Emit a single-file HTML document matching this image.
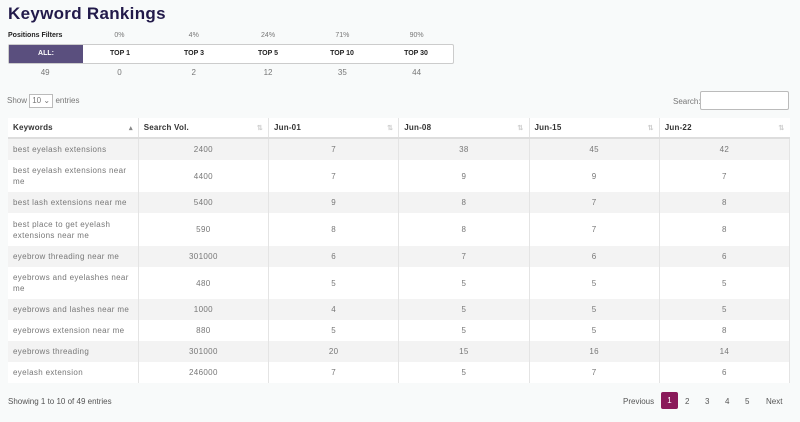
<!DOCTYPE html>
<html><head><style>
*{box-sizing:border-box;margin:0;padding:0}
body{width:800px;height:422px;background:#f8fafa;font-family:"Liberation Sans",sans-serif;color:#777;font-size:8px;position:relative;overflow:hidden}
.abs{position:absolute}
h1{position:absolute;left:8px;top:4px;font-size:17px;color:#221a4a;font-weight:bold;letter-spacing:.3px}
.pf{left:8px;top:32px;font-size:7px;font-weight:bold;color:#222}
.row{position:absolute;left:8px;width:446px;display:flex}
.row div{width:74.3px;text-align:center}
.bar{position:absolute;left:8px;top:44px;width:446px;height:20px;border:1px solid #ccc;background:#fff;display:flex;border-radius:2px}
.bar div{width:74.3px;text-align:center;line-height:18px;font-size:7px;font-weight:bold;color:#222}
.bar .on{background:#5a4f7e;color:#fff}
table{position:absolute;left:8px;top:118px;width:782px;border-collapse:collapse;background:#fff;table-layout:fixed}
td,th{border-right:1px solid #e4e4e4;font-size:8px;color:#777;text-align:center;line-height:11px;padding:0 5px;font-weight:normal;width:130px;letter-spacing:.35px}
th{height:20px;text-align:left;color:#333;font-weight:bold;border-bottom:2px solid #ddd;position:relative;letter-spacing:.2px}
th:after{content:"⇅";position:absolute;right:5px;top:5px;font-size:7px;color:#ccc}
th:first-child:after{content:"▴";color:#888}
td:first-child{text-align:left}
tr:nth-child(even) td{background:#f3f3f3}
.pg{position:absolute;top:397px;font-size:8px;color:#555}
</style></head><body>
<h1>Keyword Rankings</h1>
<div class="abs pf">Positions Filters</div>
<div class="row" style="top:32px;font-size:7px"><div></div><div>0%</div><div>4%</div><div>24%</div><div>71%</div><div>90%</div></div>
<div class="bar"><div class="on">ALL:</div><div>TOP 1</div><div>TOP 3</div><div>TOP 5</div><div>TOP 10</div><div>TOP 30</div></div>
<div class="row" style="top:68px"><div>49</div><div>0</div><div>2</div><div>12</div><div>35</div><div>44</div></div>
<div class="abs" style="left:7px;top:94px">Show <span style="display:inline-block;width:24px;height:14px;border:1px solid #bbb;background:#fff;vertical-align:middle;padding-left:2px;line-height:12px">10 ⌄</span> entries</div>
<div class="abs" style="left:673px;top:97px">Search:</div>
<div class="abs" style="left:700px;top:91px;width:89px;height:19px;border:1px solid #bbb;background:#fff;border-radius:2px"></div>
<table>
<tr><th>Keywords</th><th>Search Vol.</th><th>Jun-01</th><th>Jun-08</th><th>Jun-15</th><th style="border-right:0">Jun-22</th></tr>
<tr style="height:22px"><td>best eyelash extensions</td><td>2400</td><td>7</td><td>38</td><td>45</td><td>42</td></tr>
<tr style="height:32px"><td>best eyelash extensions near me</td><td>4400</td><td>7</td><td>9</td><td>9</td><td>7</td></tr>
<tr style="height:21px"><td>best lash extensions near me</td><td>5400</td><td>9</td><td>8</td><td>7</td><td>8</td></tr>
<tr style="height:33px"><td>best place to get eyelash extensions near me</td><td>590</td><td>8</td><td>8</td><td>7</td><td>8</td></tr>
<tr style="height:21px"><td>eyebrow threading near me</td><td>301000</td><td>6</td><td>7</td><td>6</td><td>6</td></tr>
<tr style="height:32px"><td>eyebrows and eyelashes near me</td><td>480</td><td>5</td><td>5</td><td>5</td><td>5</td></tr>
<tr style="height:21px"><td>eyebrows and lashes near me</td><td>1000</td><td>4</td><td>5</td><td>5</td><td>5</td></tr>
<tr style="height:21px"><td>eyebrows extension near me</td><td>880</td><td>5</td><td>5</td><td>5</td><td>8</td></tr>
<tr style="height:21px"><td>eyebrows threading</td><td>301000</td><td>20</td><td>15</td><td>16</td><td>14</td></tr>
<tr style="height:21px"><td>eyelash extension</td><td>246000</td><td>7</td><td>5</td><td>7</td><td>6</td></tr>
</table>
<div class="pg" style="left:8px">Showing 1 to 10 of 49 entries</div>
<div class="pg" style="left:623px">Previous</div>
<div class="abs" style="left:661px;top:392px;width:17px;height:17px;background:#8a1a5a;color:#fff;border-radius:2px;text-align:center;line-height:17px;font-size:8px">1</div>
<div class="pg" style="left:685px">2</div>
<div class="pg" style="left:705px">3</div>
<div class="pg" style="left:725px">4</div>
<div class="pg" style="left:745px">5</div>
<div class="pg" style="left:766px">Next</div>
</body></html>
